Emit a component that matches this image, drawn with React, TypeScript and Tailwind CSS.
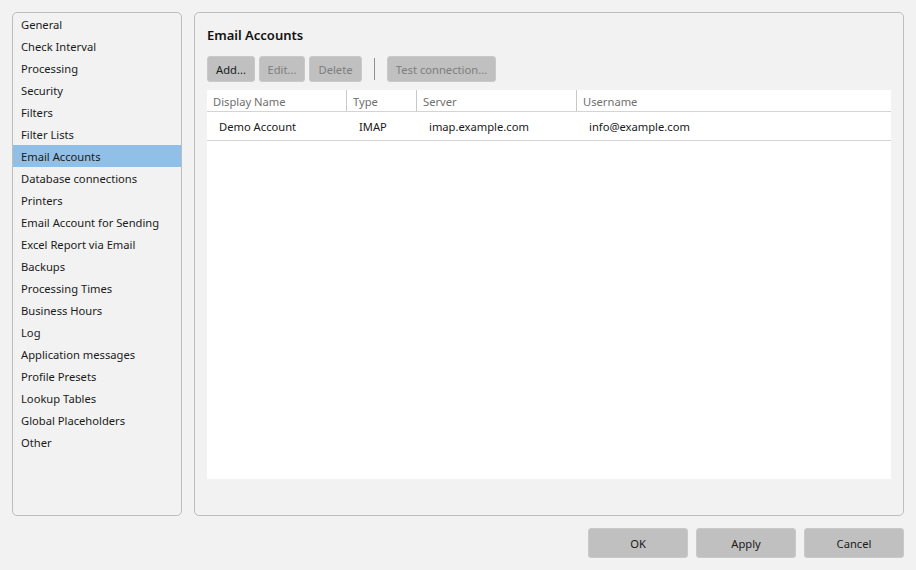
const items = [
  "General",
  "Check Interval",
  "Processing",
  "Security",
  "Filters",
  "Filter Lists",
  "Email Accounts",
  "Database connections",
  "Printers",
  "Email Account for Sending",
  "Excel Report via Email",
  "Backups",
  "Processing Times",
  "Business Hours",
  "Log",
  "Application messages",
  "Profile Presets",
  "Lookup Tables",
  "Global Placeholders",
  "Other",
];

const toolBtn =
  "flex h-[26px] items-center justify-center rounded-[3px] border border-[#c9c9c9] bg-[#c0c0c0] pt-[2px] text-[11.2px]";

function FooterButton({ label }: { label: string }) {
  return (
    <button className="h-[30px] w-[100px] rounded-[3px] border border-[#c9c9c9] bg-[#c0c0c0] pt-[2px] text-[11.2px] text-[#1a1a1a]">
      {label}
    </button>
  );
}

export default function App() {
  return (
    <div
      className="flex h-[570px] w-[916px] flex-col gap-3 overflow-hidden bg-[#f2f2f2] p-3 text-[#1a1a1a]"
      style={{ fontFamily: '"Noto Sans", "Open Sans", sans-serif' }}
    >
      <div className="flex h-[504px] gap-3">
        <nav className="w-[170px] rounded-[5px] border border-[#bdbdbd]">
          {items.map((item) => (
            <div
              key={item}
              className={
                "flex h-[22px] items-center pl-2 pt-[2px] text-[11.2px] " +
                (item === "Email Accounts" ? "bg-[#90c0e8]" : "")
              }
            >
              {item}
            </div>
          ))}
        </nav>

        <main className="flex w-[710px] flex-col rounded-[5px] border border-[#bdbdbd] pl-3 pr-3">
          <h1 className="mt-[13px] h-[18px] text-[13px] leading-[18px] font-semibold text-[#111]">
            Email Accounts
          </h1>

          <div className="mt-[12px] flex items-center">
            <button className={toolBtn + " w-[48px] text-[#1a1a1a]"}>Add...</button>
            <button className={toolBtn + " ml-1 w-[46px] text-[#7d7d7d]"}>Edit...</button>
            <button className={toolBtn + " ml-1 w-[53px] text-[#7d7d7d]"}>Delete</button>
            <div className="mx-3 h-[22px] w-px bg-[#8f8f8f]" />
            <button className={toolBtn + " w-[109px] text-[#7d7d7d]"}>Test connection...</button>
          </div>

          <div className="mt-2 h-[389px] w-[684px] bg-white text-[11.2px]">
            <div className="flex h-[22px] border-b border-[#d4d4d4] text-[#6f6f6f]">
              <div className="w-[140px] border-r border-[#c8c8c8] pl-[6px] pt-px leading-[22px]">Display Name</div>
              <div className="w-[70px] border-r border-[#c8c8c8] pl-[6px] pt-px leading-[22px]">Type</div>
              <div className="w-[160px] border-r border-[#c8c8c8] pl-[6px] pt-px leading-[22px]">Server</div>
              <div className="flex-1 pl-[6px] pt-px leading-[22px]">Username</div>
            </div>
            <div className="flex h-[29px] items-center border-b border-[#d4d4d4] pt-[3px]">
              <div className="w-[140px] pl-3">Demo Account</div>
              <div className="w-[70px] pl-3">IMAP</div>
              <div className="w-[160px] pl-3">imap.example.com</div>
              <div className="flex-1 pl-3">info@example.com</div>
            </div>
          </div>
        </main>
      </div>

      <div className="flex justify-end gap-2">
        <FooterButton label="OK" />
        <FooterButton label="Apply" />
        <FooterButton label="Cancel" />
      </div>
    </div>
  );
}
